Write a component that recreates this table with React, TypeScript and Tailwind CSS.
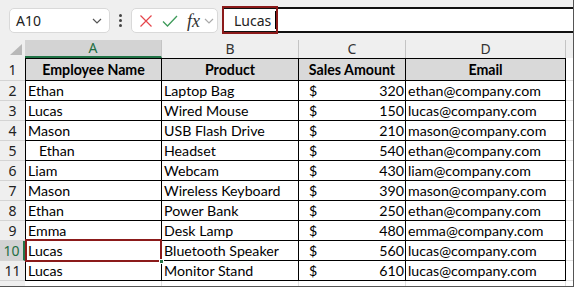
import React from "react";

const ROWS: { name: string; product: string; amount: number; email: string }[] = [
  { name: "Ethan", product: "Laptop Bag", amount: 320, email: "ethan@company.com" },
  { name: "Lucas", product: "Wired Mouse", amount: 150, email: "lucas@company.com" },
  { name: "Mason", product: "USB Flash Drive", amount: 210, email: "mason@company.com" },
  { name: "   Ethan", product: "Headset", amount: 540, email: "ethan@company.com" },
  { name: "Liam", product: "Webcam", amount: 430, email: "liam@company.com" },
  { name: "Mason", product: "Wireless Keyboard", amount: 390, email: "mason@company.com" },
  { name: "Ethan", product: "Power Bank", amount: 250, email: "ethan@company.com" },
  { name: "Emma", product: "Desk Lamp", amount: 480, email: "emma@company.com" },
  { name: "Lucas", product: "Bluetooth Speaker", amount: 560, email: "lucas@company.com" },
  { name: "Lucas", product: "Monitor Stand", amount: 610, email: "lucas@company.com" },
];

const uiFont = { fontFamily: '"Noto Sans", "Open Sans", sans-serif' };
const cellFont = { fontFamily: 'Lato, "Liberation Sans", sans-serif' };

function Chevron({ color }: { color: string }): React.ReactElement {
  return (
    <svg width="10" height="6" viewBox="0 0 10 6" fill="none">
      <path d="M1 1l4 4 4-4" stroke={color} strokeWidth="1.2" />
    </svg>
  );
}

function Toolbar(): React.ReactElement {
  return (
    <div className="flex h-[40px] shrink-0 items-start pt-[8px]" style={uiFont}>
      {/* Name box */}
      <div className="ml-[9px] flex h-[25px] w-[101px] items-center justify-between rounded-[5px] border border-[#d9d9d9] bg-white pl-[6px] pr-[7px]">
        <span className="text-[14px] text-[#222]">A10</span>
        <Chevron color="#555" />
      </div>

      {/* Vertical dots */}
      <div className="flex h-[25px] w-[20px] flex-col items-center justify-center gap-[2px]">
        <span className="h-[3px] w-[3px] rounded-full bg-[#444]" />
        <span className="h-[3px] w-[3px] rounded-full bg-[#444]" />
        <span className="h-[3px] w-[3px] rounded-full bg-[#444]" />
      </div>

      {/* Cancel / enter / fx */}
      <div className="ml-[1px] flex h-[25px] w-[87px] items-center rounded-[5px] border border-[#d9d9d9] bg-white pl-[6px]">
        <svg width="14" height="14" viewBox="0 0 14 14" className="ml-[1px]">
          <path d="M1.5 1.5l11 11M12.5 1.5l-11 11" stroke="#e5454b" strokeWidth="1.2" />
        </svg>
        <svg width="16" height="14" viewBox="0 0 16 14" className="ml-[9px]">
          <path d="M1 7.5l4.5 4.5L15 2" stroke="#3f9b5b" strokeWidth="1.3" fill="none" />
        </svg>
        <span
          className="ml-[9px] text-[18px] italic leading-none text-[#333]"
          style={{ fontFamily: '"Liberation Serif", "DejaVu Serif", serif' }}
        >
          fx
        </span>
        <span className="ml-[4px]">
          <Chevron color="#aaa" />
        </span>
      </div>

      {/* Formula input */}
      <div className="relative ml-[4px] mt-[-1px] flex h-[26px] flex-1 items-center border-y-2 border-[#111] bg-white">
        <div className="absolute left-0 top-[-3px] h-[28px] w-[56px] border-2 border-[#8b1a1a]" />
        <span className="ml-[12px] text-[14px] text-[#222]">Lucas</span>
        <span className="ml-[4px] h-[18px] w-[1px] bg-black" />
      </div>
    </div>
  );
}

function ColumnHeaders(): React.ReactElement {
  const cols = [
    { label: "A", w: "w-[137px]", active: true },
    { label: "B", w: "w-[137px]", active: false },
    { label: "C", w: "w-[107px]", active: false },
    { label: "D", w: "w-[160px]", active: false },
  ];
  return (
    <div className="flex h-[18px] shrink-0 text-[14px]" style={uiFont}>
      <div className="relative w-[25px] shrink-0">
        <svg width="12" height="11" viewBox="0 0 12 11" className="absolute bottom-[3px] right-[3px]">
          <path d="M12 0v11H0z" fill="#b8b8b8" />
        </svg>
      </div>
      {cols.map((c) => (
        <div
          key={c.label}
          className={`${c.w} flex shrink-0 items-center justify-center border-r border-[#c4c4c4] leading-none ${
            c.active ? "border-b-2 border-b-[#217346] bg-[#d3d3d3] text-[#1e6e42]" : "text-[#333]"
          }`}
        >
          {c.label}
        </div>
      ))}
      <div className="flex-1" />
    </div>
  );
}

function RowHeader({ n, active }: { n: number; active?: boolean }): React.ReactElement {
  return (
    <div
      className={`flex w-[25px] shrink-0 items-center justify-center border-b border-[#d4d4d4] text-[14px] ${
        active ? "border-r-2 border-r-[#217346] bg-[#d3d3d3] text-[#1e6e42]" : "bg-[#efefef] text-[#222]"
      }`}
      style={uiFont}
    >
      {n}
    </div>
  );
}

export default function App(): React.ReactElement {
  return (
    <div className="h-[288px] w-[574px] overflow-hidden bg-white">
      <div className="relative flex h-[287px] flex-col overflow-hidden border-b border-r border-[#555] bg-[#efefef]">
        <Toolbar />
        <ColumnHeaders />

        <div className="flex shrink-0 flex-col text-[14.2px] text-black" style={cellFont}>
          {/* Row 1: headings */}
          <div className="flex h-[23px]">
            <RowHeader n={1} />
            <div className="flex w-[137px] shrink-0 items-center justify-center border border-black bg-[#d9d9d9] font-bold">
              Employee Name
            </div>
            <div className="flex w-[137px] shrink-0 items-center justify-center border-y border-r border-black bg-[#d9d9d9] font-bold">
              Product
            </div>
            <div className="flex w-[107px] shrink-0 items-center justify-center border-y border-r border-black bg-[#d9d9d9] font-bold">
              Sales Amount
            </div>
            <div className="flex w-[160px] shrink-0 items-center justify-center border-y border-r border-black bg-[#d9d9d9] font-bold">
              Email
            </div>
            <div className="flex-1 border-b border-[#e1e1e1] bg-white" />
          </div>

          {ROWS.map((r, i) => (
            <div key={i} className="flex h-[20px]">
              <RowHeader n={i + 2} active={i === 8} />
              <div className="flex w-[137px] shrink-0 items-center whitespace-pre border-x border-b border-black bg-white pl-[2px]">
                {r.name}
              </div>
              <div className="flex w-[137px] shrink-0 items-center border-b border-r border-black bg-white pl-[2px]">
                {r.product}
              </div>
              <div className="flex w-[107px] shrink-0 items-center justify-between border-b border-r border-black bg-white pl-[10px] pr-[1px]">
                <span>$</span>
                <span>{r.amount}</span>
              </div>
              <div className="flex w-[160px] shrink-0 items-center border-b border-r border-black bg-white pl-[2px]">
                {r.email}
              </div>
              <div className="flex-1 border-b border-[#e1e1e1] bg-white" />
            </div>
          ))}

          {/* Partial row 12 */}
          <div className="flex h-[10px]">
            <div className="w-[25px] shrink-0 bg-[#efefef]" />
            <div className="w-[137px] shrink-0 border-r border-[#e1e1e1] bg-white" />
            <div className="w-[137px] shrink-0 border-r border-[#e1e1e1] bg-white" />
            <div className="w-[107px] shrink-0 border-r border-[#e1e1e1] bg-white" />
            <div className="w-[160px] shrink-0 border-r border-[#e1e1e1] bg-white" />
            <div className="flex-1 bg-white" />
          </div>
        </div>

        {/* Active cell A10 */}
        <div className="absolute left-[25px] top-[239px] h-[23px] w-[137px] border-2 border-[#8b1a1a]">
          <span className="absolute bottom-[-4px] right-[-4px] h-[5px] w-[5px] border border-white bg-[#217346]" />
        </div>
      </div>
    </div>
  );
}
